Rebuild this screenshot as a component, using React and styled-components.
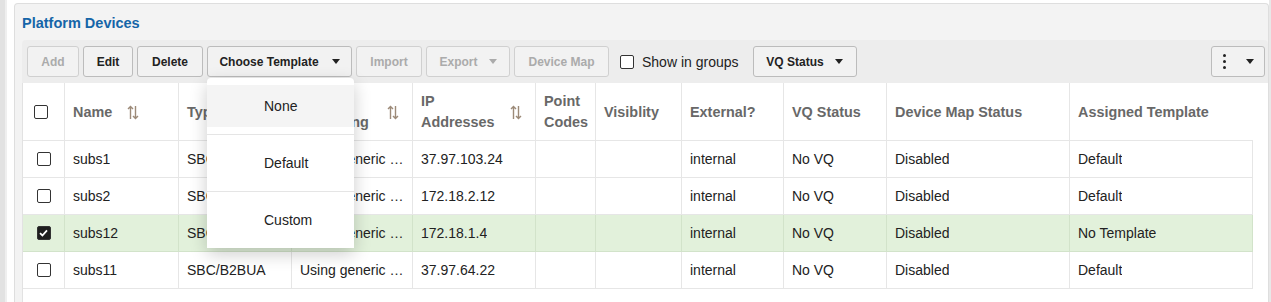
import React from 'react'
import styled, { createGlobalStyle } from 'styled-components'

const GlobalStyle = createGlobalStyle`
  html, body { margin: 0; padding: 0; background: #fff; }
  body { font-family: "Liberation Sans", Arial, sans-serif; color: #222; }
  * { box-sizing: border-box; }
`

const Page = styled.div`
  display: flex;
  height: 302px;
  overflow: hidden;
`

const SideEdge = styled.div`
  width: 7px;
  flex: none;
  background: linear-gradient(to right, #e2e2e2 0 5px, #efefef 5px 7px);
`

const RightEdge = styled.div`
  width: 2px;
  flex: none;
  background: #e8e8e8;
`

const Panel = styled.section`
  flex: 1;
  min-width: 0;
  display: flex;
  flex-direction: column;
  margin: 3px 0 0 7px;
  padding: 10px 0 0 7px;
  background: #f3f3f3;
  border: 1px solid #dedede;
  border-bottom: none;
  border-radius: 4px 4px 0 0;
`

const Title = styled.h2`
  margin: 0 0 8px;
  font-size: 14.5px;
  line-height: 18px;
  font-weight: bold;
  color: #1565a8;
`

const Toolbar = styled.div`
  display: flex;
  align-items: center;
  gap: 4px;
  padding: 6px 3px 6px 5px;
  background: #ededed;
  border-radius: 4px 4px 0 0;
`

const Button = styled.button`
  display: inline-flex;
  align-items: center;
  justify-content: center;
  flex: none;
  width: ${p => p.$w}px;
  height: 31px;
  padding: 0;
  background: #f2f2f2;
  border: 1px solid ${p => (p.disabled ? '#d0d0d0' : '#bcbcbc')};
  border-radius: 3px;
  font-family: inherit;
  font-size: 12px;
  font-weight: bold;
  color: ${p => (p.disabled ? '#ababab' : '#222')};
  white-space: nowrap;
  cursor: ${p => (p.disabled ? 'default' : 'pointer')};
`

const Caret = styled.span`
  display: inline-block;
  margin-left: ${p => p.$gap || 13}px;
  border-left: 4px solid transparent;
  border-right: 4px solid transparent;
  border-top: 5px solid currentColor;
`

const MenuAnchor = styled.div`
  position: relative;
  display: flex;
`

const Menu = styled.div`
  position: absolute;
  top: calc(100% + 1px);
  left: 0;
  z-index: 10;
  width: 147px;
  padding-top: 7px;
  background: #fff;
  border-radius: 4px;
  box-shadow: 0 6px 18px rgba(0, 0, 0, 0.2);
`

const MenuItem = styled.div`
  display: flex;
  align-items: center;
  height: ${p => (p.$active ? 42 : 56)}px;
  margin-bottom: ${p => (p.$active ? 7 : 0)}px;
  padding-left: 57px;
  font-size: 14px;
  color: #222;
  background: ${p => (p.$active ? '#f4f4f4' : '#fff')};
`

const MenuDivider = styled.div`
  height: 1px;
  background: #e5e5e5;
`

const CheckLabel = styled.label`
  display: flex;
  align-items: center;
  gap: 8px;
  margin: 0 10px 0 7px;
  font-size: 14px;
  color: #222;
`

const Box = styled.span`
  display: inline-flex;
  align-items: center;
  justify-content: center;
  width: 14px;
  height: 14px;
  border: 1.5px solid #333;
  border-radius: 2px;
  background: ${p => (p.$checked ? '#1e1e1e' : '#fff')};
`

const Kebab = styled(Button)`
  margin-left: auto;
`

const Dots = styled.span`
  display: flex;
  flex-direction: column;
  gap: 3px;
  span {
    width: 3px;
    height: 3px;
    border-radius: 50%;
    background: #222;
  }
`

const TableWrap = styled.div`
  flex: 1;
  padding-right: 16px;
  background: #fff;
  border-left: 1px solid #e2e2e2;
`

const columns = '42px 114px 113px 121px 123px 60px 86px 102px 103px 183px 183px'

const Row = styled.div`
  display: grid;
  grid-template-columns: ${columns};
  background: ${p => (p.$selected ? '#e2f1db' : '#fff')};
`

const HeadCell = styled.div`
  display: flex;
  align-items: center;
  justify-content: ${p => (p.$center ? 'center' : 'flex-start')};
  gap: 15px;
  min-height: 58px;
  padding: 8px 13px 7px 8px;
  font-size: 14.4px;
  font-weight: bold;
  line-height: 21px;
  color: #686868;
  border-right: 1px solid #e6e6e6;
  border-bottom: 1px solid #e6e6e6;
  &:last-child { border-right: none; }
`

const Cell = styled.div`
  display: flex;
  align-items: center;
  justify-content: ${p => (p.$center ? 'center' : 'flex-start')};
  min-width: 0;
  height: 37px;
  padding: 0 8px;
  font-size: 14px;
  color: #222;
  border-right: 1px solid ${p => (p.$selected ? '#d2e3ca' : '#e6e6e6')};
  border-bottom: 1px solid ${p => (p.$selected ? '#d2e3ca' : '#e6e6e6')};
  span.txt {
    display: block;
    min-width: 0;
    overflow: hidden;
    white-space: nowrap;
    text-overflow: ellipsis;
  }
`

function SortIcon() {
  return (
    <svg width="12" height="15" viewBox="0 0 12 15" fill="none" stroke="#9c8a78" strokeWidth="1.4" style={{ flex: 'none' }}>
      <path d="M3.5 14V1.5M1 4L3.5 1.5L6 4" />
      <path d="M8.5 1v12.5M6 11L8.5 13.5L11 11" />
    </svg>
  )
}

function Check({ checked }) {
  return (
    <Box $checked={checked}>
      {checked && (
        <svg width="9" height="8" viewBox="0 0 9 8" fill="none" stroke="#fff" strokeWidth="1.8">
          <path d="M1 4.2L3.4 6.5L8 1.3" />
        </svg>
      )}
    </Box>
  )
}

const headers = [
  { label: 'Name', sort: true },
  { label: 'Type' },
  { label: 'Device Signalling', sort: true },
  { label: 'IP Addresses', sort: true },
  { label: 'Point Codes' },
  { label: 'Visiblity' },
  { label: 'External?' },
  { label: 'VQ Status' },
  { label: 'Device Map Status' },
  { label: 'Assigned Template' },
]

const devices = [
  { name: 'subs1', ip: '37.97.103.24', template: 'Default' },
  { name: 'subs2', ip: '172.18.2.12', template: 'Default' },
  { name: 'subs12', ip: '172.18.1.4', template: 'No Template', selected: true },
  { name: 'subs11', ip: '37.97.64.22', template: 'Default' },
]

export default function App() {
  return (
    <Page>
      <GlobalStyle />
      <SideEdge />
      <Panel>
        <Title>Platform Devices</Title>
        <Toolbar>
          <Button disabled $w={52}>Add</Button>
          <Button $w={50}>Edit</Button>
          <Button $w={66}>Delete</Button>
          <MenuAnchor>
            <Button $w={145}>
              Choose Template<Caret />
            </Button>
            <Menu>
              <MenuItem $active>None</MenuItem>
              <MenuDivider />
              <MenuItem>Default</MenuItem>
              <MenuDivider />
              <MenuItem>Custom</MenuItem>
            </Menu>
          </MenuAnchor>
          <Button disabled $w={66}>Import</Button>
          <Button disabled $w={84}>
            Export<Caret $gap={11} />
          </Button>
          <Button disabled $w={95}>Device Map</Button>
          <CheckLabel>
            <Check />
            Show in groups
          </CheckLabel>
          <Button $w={104}>
            VQ Status<Caret $gap={11} />
          </Button>
          <Kebab $w={54}>
            <Dots><span /><span /><span /></Dots>
            <Caret $gap={20} />
          </Kebab>
        </Toolbar>
        <TableWrap>
          <Row>
            <HeadCell $center>
              <Check />
            </HeadCell>
            {headers.map(h => (
              <HeadCell key={h.label}>
                <span>{h.label}</span>
                {h.sort && <SortIcon />}
              </HeadCell>
            ))}
          </Row>
          {devices.map(d => (
            <Row key={d.name} $selected={d.selected}>
              <Cell $center $selected={d.selected}><Check checked={d.selected} /></Cell>
              <Cell $selected={d.selected}><span className="txt">{d.name}</span></Cell>
              <Cell $selected={d.selected}><span className="txt">SBC/B2BUA</span></Cell>
              <Cell $selected={d.selected}><span className="txt">Using generic profile</span></Cell>
              <Cell $selected={d.selected}><span className="txt">{d.ip}</span></Cell>
              <Cell $selected={d.selected} />
              <Cell $selected={d.selected} />
              <Cell $selected={d.selected}><span className="txt">internal</span></Cell>
              <Cell $selected={d.selected}><span className="txt">No VQ</span></Cell>
              <Cell $selected={d.selected}><span className="txt">Disabled</span></Cell>
              <Cell $selected={d.selected}><span className="txt">{d.template}</span></Cell>
            </Row>
          ))}
        </TableWrap>
      </Panel>
      <RightEdge />
    </Page>
  )
}
